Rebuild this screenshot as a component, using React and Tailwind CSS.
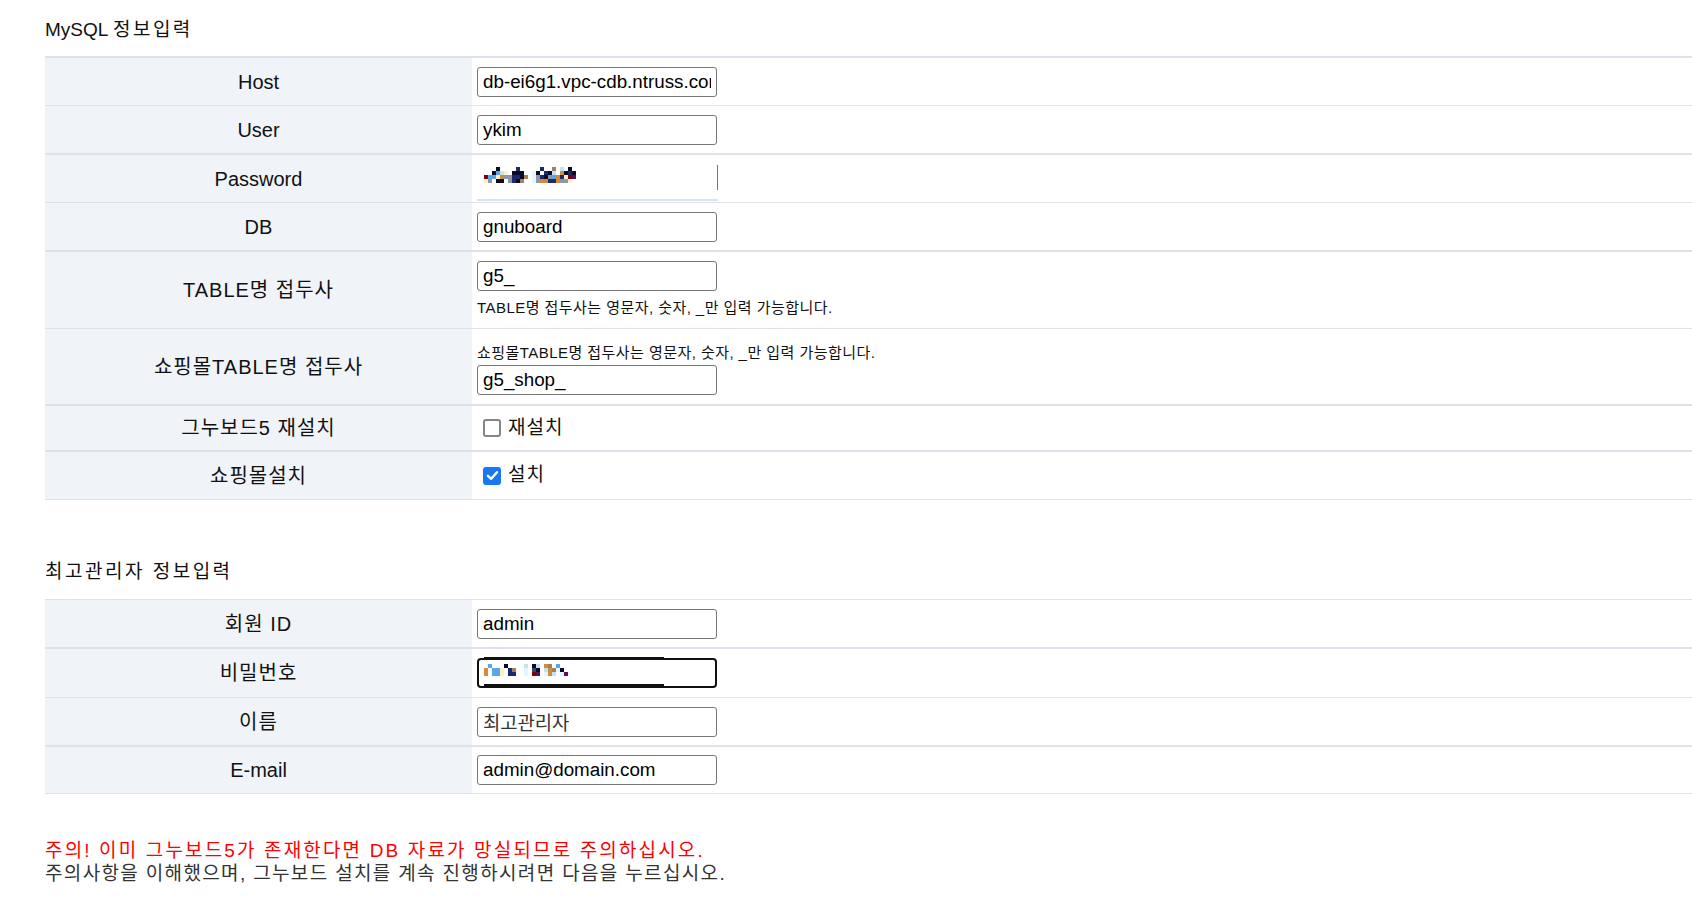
import React from "react"

const COLORS = {
  k: "#0b0b26",
  n: "#1b2a6e",
  b: "#58a8e8",
  l: "#bfe3f7",
  c: "#e2f8ff",
  o: "#d38a3a",
  y: "#fff1c2",
  r: "#7a0012",
  g: "#8c98a8",
  t: "#a3805e",
  p: "#5b1152",
  s: "#2c4a78",
}

const pw1 = [
  "...k....n.....n..t.l.k.",
  "..kbly.kkk..ck.nkl.oknk",
  "rbbyoggnnkt.cgnkgbonyrp",
  "yg.kk.gnkt..cgoonnoggy.",
]

const pw2 = [
  ".b...k....l.kl.ot.b..",
  "o.bby.nt..c.sk.lotck.",
  "o.bby.nn..c.rp.col.cp",
]

function Mosaic({ rows, cell = 4 }) {
  const w = rows[0].length * cell
  const h = rows.length * cell
  return (
    <svg width={w} height={h} className="block">
      {rows.map((row, y) =>
        row.split("").map((ch, x) =>
          COLORS[ch] ? (
            <rect key={x + "-" + y} x={x * cell} y={y * cell} width={cell} height={cell} fill={COLORS[ch]} />
          ) : null
        )
      )}
    </svg>
  )
}

function Field({ value, gray }) {
  return (
    <input
      readOnly
      value={value}
      className={
        "w-[240px] h-[30px] border border-[#767676] rounded-[3px] px-[5px] text-[18.8px] bg-white outline-none " +
        (gray ? "text-[#333]" : "text-black")
      }
    />
  )
}

function Row({ label, top, h, last, children, tdClass }) {
  const korean = /[가-힣]/.test(label)
  return (
    <div
      className={
        "flex border-[#dde3ea] " +
        (top === 2 ? "border-t-2 " : "border-t ") +
        (last ? "border-b" : "")
      }
    >
      <div
        className={
          "w-[427px] shrink-0 bg-[#f0f3f8] flex items-center justify-center text-[20px] text-[#111] " +
          (korean ? "tracking-[1px] " : "") +
          h
        }
      >
        {label}
      </div>
      <div className={"flex-1 pl-[5px] " + (tdClass || "flex items-center")}>{children}</div>
    </div>
  )
}

function Check({ checked, label }) {
  return (
    <div className="flex items-center pl-[6px] gap-[7px]">
      {checked ? (
        <div className="w-[18px] h-[18px] rounded-[3px] bg-[#1a77f2] flex items-center justify-center">
          <svg width="13" height="13" viewBox="0 0 13 13">
            <path d="M2 6.8 L5.2 9.8 L11 3.2" fill="none" stroke="white" strokeWidth="2.4" strokeLinecap="round" strokeLinejoin="round" />
          </svg>
        </div>
      ) : (
        <div className="w-[18px] h-[18px] rounded-[3px] border-2 border-[#858585] bg-white" />
      )}
      <span className="text-[19px] text-[#111] tracking-[1px]">{label}</span>
    </div>
  )
}

export default function App() {
  return (
    <div className="min-h-screen bg-white font-['Liberation_Sans','Noto_Sans_CJK_KR',sans-serif] text-black">
      <div className="pl-[45px] pt-[19px]">
        <h2 className="text-[19px] leading-[22px] mb-[15px] text-[#111]">
          MySQL <span className="tracking-[2.5px]">정보입력</span>
        </h2>

        <div>
          <Row label="Host" top={2} h="h-[47px]">
            <Field value="db-ei6g1.vpc-cdb.ntruss.com" />
          </Row>
          <Row label="User" top={1} h="h-[47px]">
            <Field value="ykim" />
          </Row>
          <Row label="Password" top={2} h="h-[47px]" tdClass="pl-[4px]">
            <div className="w-[241px] pt-[10px]">
              <div className="h-[25px] border-r border-[#767676] pl-[7px] pt-[2px]">
                <Mosaic rows={pw1} />
              </div>
              <div className="mt-[9px] h-[2px] bg-[#dde3ea]" />
            </div>
          </Row>
          <Row label="DB" top={1} h="h-[47px]">
            <Field value="gnuboard" />
          </Row>
          <Row label="TABLE명 접두사" top={2} h="h-[76px]" tdClass="flex flex-col pt-[9px]">
            <Field value="g5_" />
            <p className="mt-[8px] text-[15px] leading-[18px] text-[#111] tracking-[0.45px]">
              TABLE명 접두사는 영문자, 숫자, _만 입력 가능합니다.
            </p>
          </Row>
          <Row label="쇼핑몰TABLE명 접두사" top={1} h="h-[75px]" tdClass="flex flex-col pt-[15px]">
            <p className="text-[15px] leading-[18px] text-[#111] tracking-[0.45px]">
              쇼핑몰TABLE명 접두사는 영문자, 숫자, _만 입력 가능합니다.
            </p>
            <div className="mt-[3px]">
              <Field value="g5_shop_" />
            </div>
          </Row>
          <Row label="그누보드5 재설치" top={2} h="h-[44px]">
            <Check label="재설치" />
          </Row>
          <Row label="쇼핑몰설치" top={2} h="h-[47px]" last>
            <Check checked label="설치" />
          </Row>
        </div>

        <h2 className="mt-[61px] text-[19px] leading-[22px] tracking-[2.5px] mb-[16px] text-[#111]">최고관리자 정보입력</h2>

        <div>
          <Row label="회원 ID" top={1} h="h-[47px]">
            <Field value="admin" />
          </Row>
          <Row label="비밀번호" top={2} h="h-[48px]">
            <div className="relative w-[240px] h-[30px] border-2 border-[#111] rounded-[4px] bg-white">
              <div className="absolute -top-[3px] left-[5px] w-[180px] h-[3px] bg-[#111]" />
              <div className="absolute top-[24px] left-[5px] w-[180px] h-[2px] bg-[#111]" />
              <div className="absolute top-[4px] left-[5px]">
                <Mosaic rows={pw2} />
              </div>
            </div>
          </Row>
          <Row label="이름" top={1} h="h-[47px]">
            <Field value="최고관리자" gray />
          </Row>
          <Row label="E-mail" top={2} h="h-[46px]" last>
            <Field value="admin@domain.com" />
          </Row>
        </div>

        <div className="mt-[45px] text-[19px] leading-[23px]">
          <p className="text-[#ff0000] tracking-[2.15px]">주의! 이미 그누보드5가 존재한다면 DB 자료가 망실되므로 주의하십시오.</p>
          <p className="text-[#333] tracking-[1.35px]">주의사항을 이해했으며, 그누보드 설치를 계속 진행하시려면 다음을 누르십시오.</p>
        </div>
      </div>
    </div>
  )
}
